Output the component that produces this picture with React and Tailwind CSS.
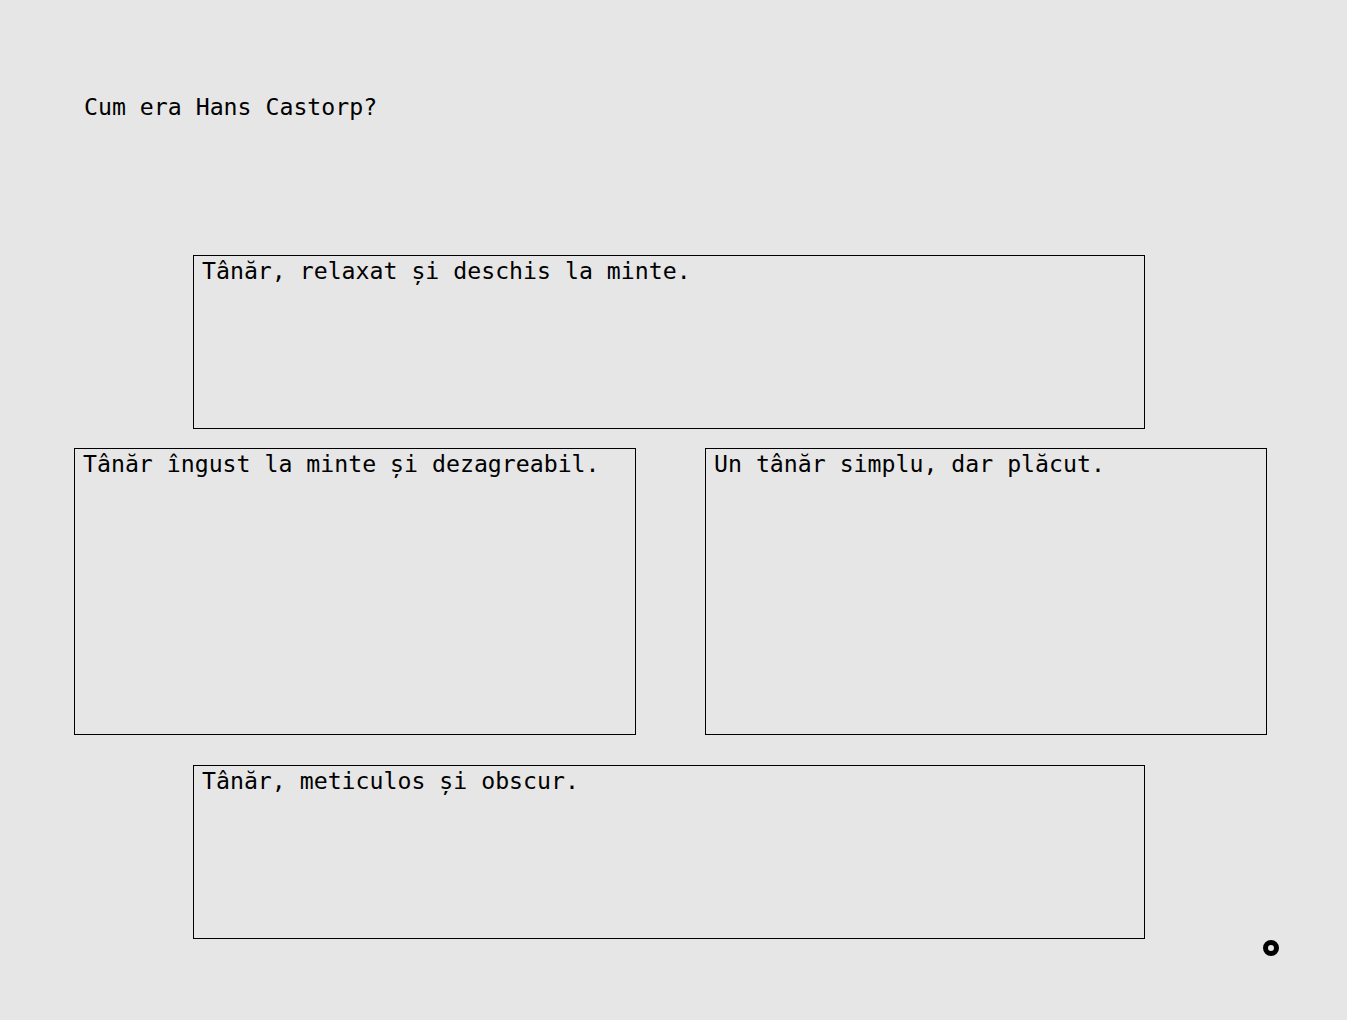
export default function App() {
  return (
    <div className="min-h-screen w-full bg-[#e6e6e6] text-black font-['DejaVu_Sans_Mono',monospace] relative">
      <div className="pt-[93px] pl-[84px] text-[23.2px] leading-[28px]">Cum era Hans Castorp?</div>
      <div className="ml-[74px] w-[1193px] mt-[134px] flex flex-col">
        <div className="ml-[119px] w-[952px] h-[174px] border border-black pl-2 pt-[1px] text-[23.2px] leading-[28px]">
          Tânăr, relaxat și deschis la minte.
        </div>
        <div className="mt-[19px] flex justify-between">
          <div className="w-[562px] h-[287px] border border-black pl-2 pt-[1px] text-[23.2px] leading-[28px]">
            Tânăr îngust la minte și dezagreabil.
          </div>
          <div className="w-[562px] h-[287px] border border-black pl-2 pt-[1px] text-[23.2px] leading-[28px]">
            Un tânăr simplu, dar plăcut.
          </div>
        </div>
        <div className="mt-[30px] ml-[119px] w-[952px] h-[174px] border border-black pl-2 pt-[1px] text-[23.2px] leading-[28px]">
          Tânăr, meticulos și obscur.
        </div>
      </div>
      <div className="absolute left-[1263px] top-[940px] w-[16px] h-[16px] rounded-full border-[5px] border-black"></div>
    </div>
  );
}
